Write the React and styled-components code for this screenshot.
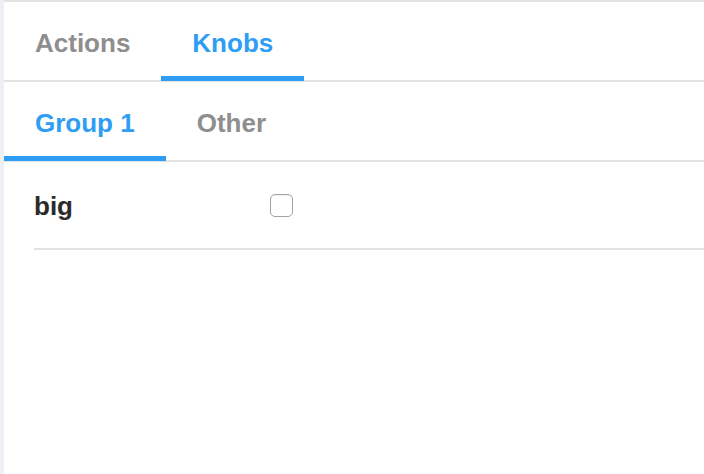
import React from "react";
import styled, { createGlobalStyle } from "styled-components";

const Global = createGlobalStyle`
  html, body { margin: 0; padding: 0; background: #fff; }
  body { font-family: "Liberation Sans", Arial, sans-serif; }
  #root { height: 474px; }
`;

const Page = styled.div`
  display: flex;
  height: 474px;
  width: 704px;
  background: #edf0f4;
`;

const Panel = styled.div`
  margin-left: 4px;
  flex: 1;
  display: flex;
  flex-direction: column;
  background: #fff;
  border-top: 2px solid #e3e3e3;
`;

const TabBar = styled.div`
  display: flex;
  height: 78px;
  border-bottom: 2px solid #e3e3e3;
`;

const Tab = styled.div`
  position: relative;
  display: flex;
  align-items: center;
  padding: 4px 31px 0;
  font-size: 26px;
  font-weight: 700;
  color: ${(p) => (p.$active ? "#2e9df3" : "#8e8e8e")};
  &::after {
    content: "";
    display: ${(p) => (p.$active ? "block" : "none")};
    position: absolute;
    left: 0;
    right: 0;
    bottom: -1px;
    height: 5px;
    background: #2e9df3;
  }
`;

const Content = styled.div`
  padding-left: 30px;
`;

const Row = styled.div`
  display: flex;
  align-items: center;
  height: 86px;
  border-bottom: 2px solid #e3e3e3;
`;

const Label = styled.div`
  width: 236px;
  font-size: 26px;
  font-weight: 700;
  color: #2b2b2b;
  padding-top: 2px;
`;

const Check = styled.div`
  box-sizing: border-box;
  width: 23px;
  height: 23px;
  border: 1.5px solid #a3a3a3;
  border-radius: 5px;
  background: #fff;
  box-shadow: inset 0 1px 1px rgba(0, 0, 0, 0.06);
`;

export default function App() {
  return (
    <>
      <Global />
      <Page>
        <Panel>
          <TabBar>
            <Tab>Actions</Tab>
            <Tab $active>Knobs</Tab>
          </TabBar>
          <TabBar>
            <Tab $active>Group 1</Tab>
            <Tab>Other</Tab>
          </TabBar>
          <Content>
            <Row>
              <Label>big</Label>
              <Check />
            </Row>
          </Content>
        </Panel>
      </Page>
    </>
  );
}
